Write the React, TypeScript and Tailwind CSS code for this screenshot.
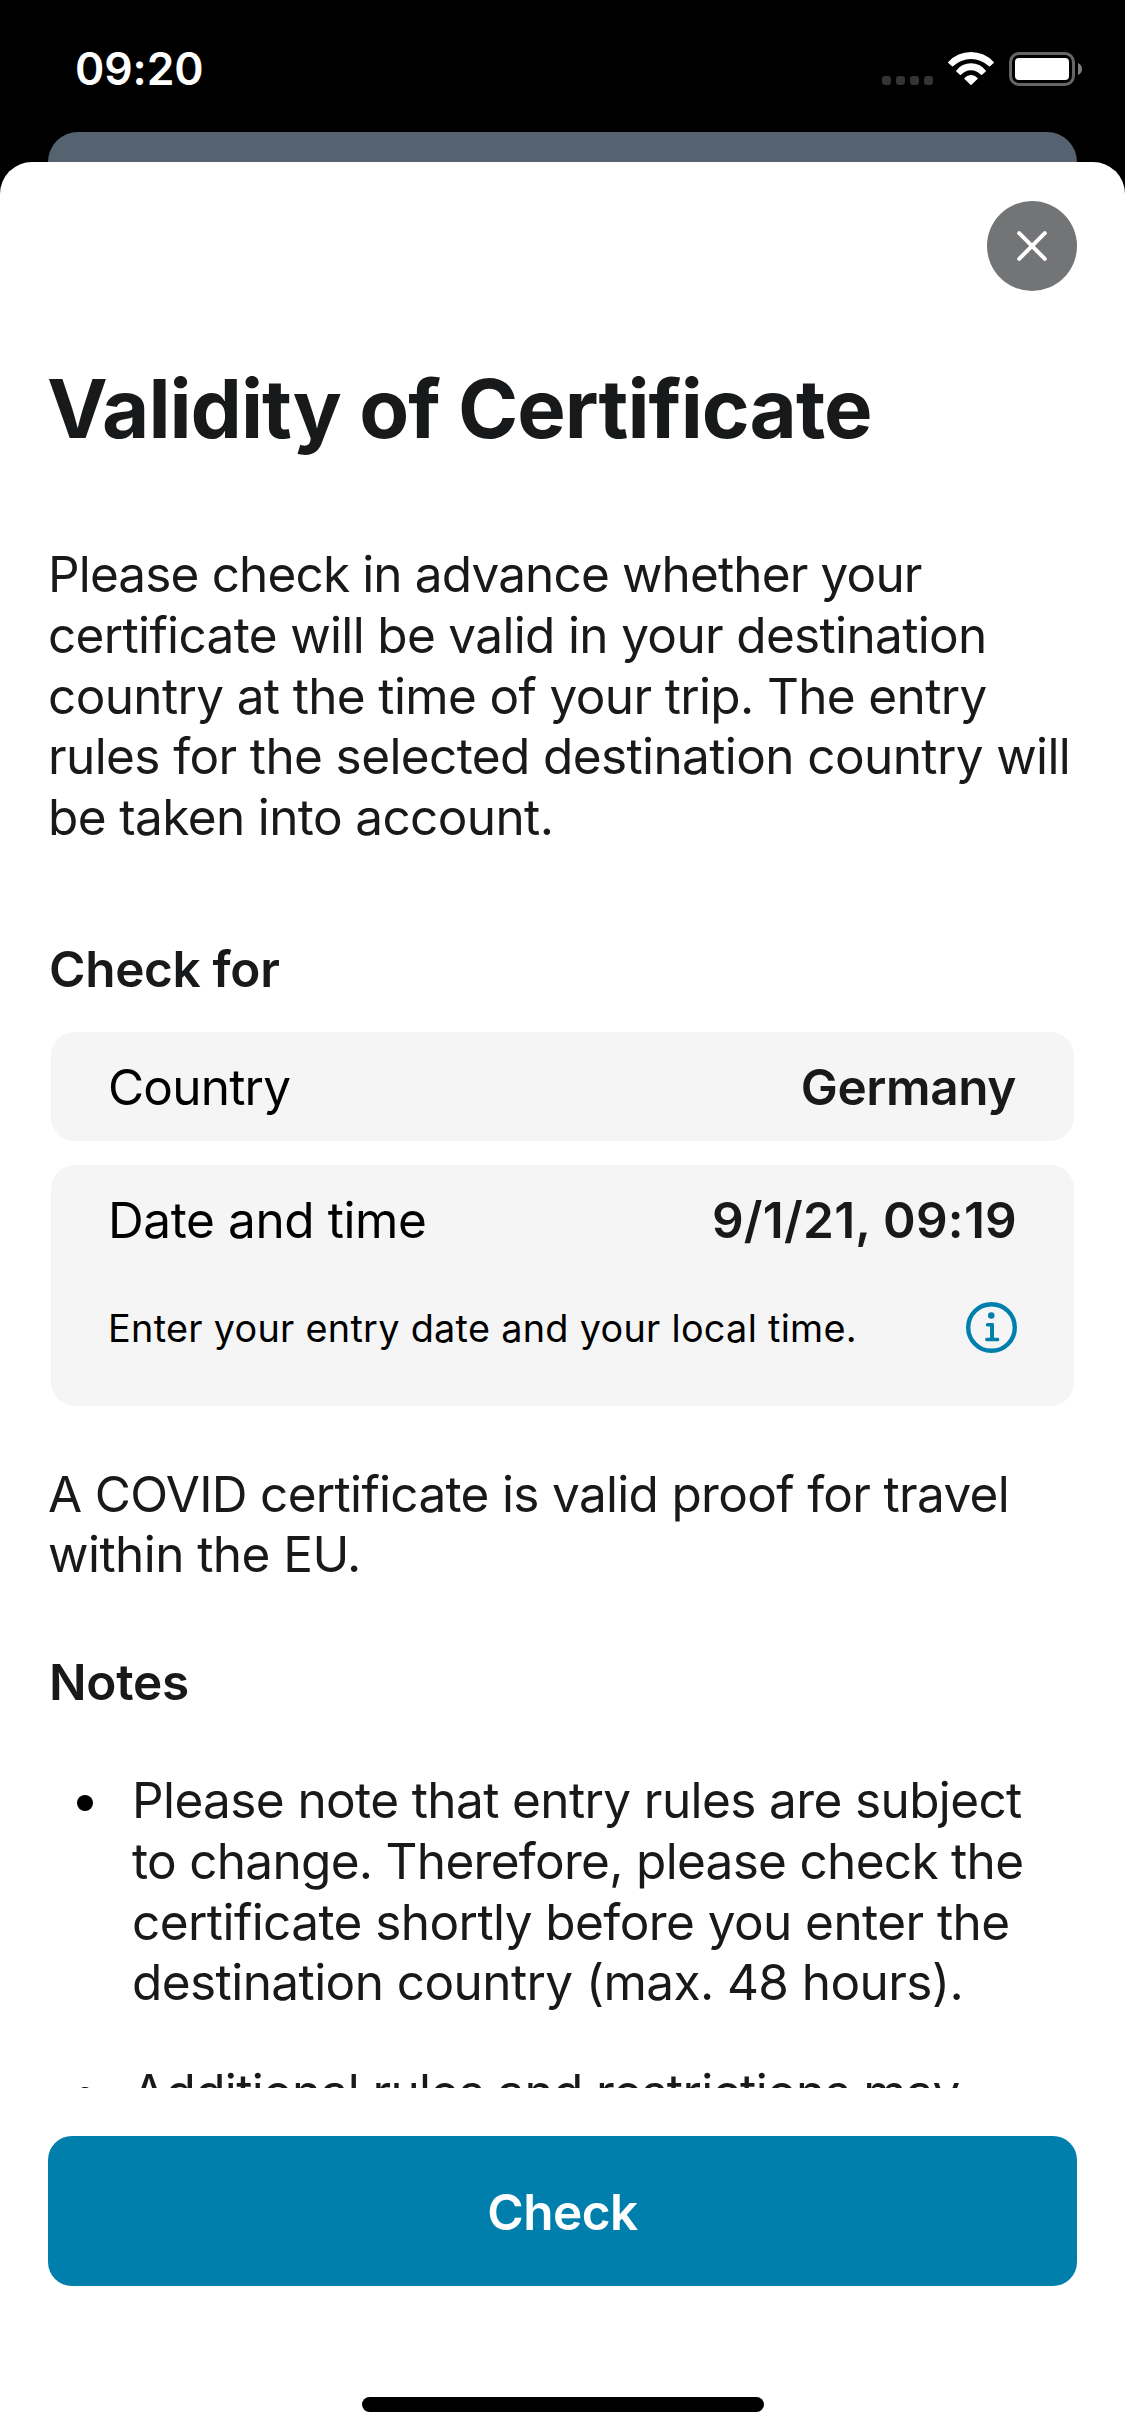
import type { ReactNode } from 'react';

function StatusBar() {
  return (
    <div className="flex h-[132px] items-start justify-between pr-[43px] pl-[75px]">
      <span className="mt-[39px] text-[44.5px] leading-[60px] font-semibold tracking-[-0.1px] text-white">
        09:20
      </span>
      <div className="mt-[52px] flex h-[34px] items-start">
        <div className="mt-6 flex gap-[5px]">
          <span className="size-[9px] rounded-[3px] bg-[#333434]" />
          <span className="size-[9px] rounded-[3px] bg-[#333434]" />
          <span className="size-[9px] rounded-[3px] bg-[#333434]" />
          <span className="size-[9px] rounded-[3px] bg-[#333434]" />
        </div>
        <svg className="ml-[15px]" width="46" height="34" viewBox="0 0 46 34" fill="#fff">
          <path d="M.3 10A30.8 30.8 0 0 1 45.7 10Q46.2 10.5 45.7 11L42 14.3Q41.5 14.8 41 14.3A26 26 0 0 0 5 14.3Q4.5 14.8 4 14.3L.3 11Q-.2 10.5 .3 10Z" />
          <path d="M8.3 18.4A18.5 18.5 0 0 1 37.7 18.4Q38.2 19 37.7 19.5L34.1 22.8Q33.5 23.3 33 22.8A13.5 13.5 0 0 0 13 22.8Q12.5 23.3 11.9 22.8L8.3 19.5Q7.8 19 8.3 18.4Z" />
          <path d="M16.5 26A8.5 8.5 0 0 1 29.5 26Q30 26.5 29.5 27L23.5 32.8Q23 33.3 22.5 32.8L16.5 27Q16 26.5 16.5 26Z" />
        </svg>
        <svg className="ml-[15px]" width="73" height="34" viewBox="0 0 73 34">
          <rect x="1.5" y="1.5" width="63" height="31" rx="8.5" fill="none" stroke="#666" strokeWidth="3" />
          <rect x="6" y="6" width="54" height="22" rx="4" fill="#fff" />
          <path d="M69 11C71.7 12 73 14.4 73 17S71.7 22 69 23Z" fill="#808080" />
        </svg>
      </div>
    </div>
  );
}

function Line({ track, children }: { track: string; children: ReactNode }) {
  return <span className={`block whitespace-nowrap ${track}`}>{children}</span>;
}

function InfoIcon() {
  return (
    <svg width="51" height="51" viewBox="0 0 51 51" fill="none" stroke="#007fad">
      <circle cx="25.5" cy="25.5" r="23.3" strokeWidth="4.4" />
      <circle cx="25.3" cy="13.5" r="3.3" fill="#007fad" stroke="none" />
      <path d="M21.5 22.7H26V37.5M20.8 37.5H31.7" strokeWidth="3.4" strokeLinecap="round" />
      <path d="M26.1 22.7V37.5" strokeWidth="3.8" />
    </svg>
  );
}

function Bullet() {
  return <span className="mt-[25px] mr-[39px] ml-[29px] size-4 shrink-0 rounded-full bg-black" />;
}

export default function App() {
  return (
    <div className="flex h-[2436px] w-[1125px] flex-col overflow-hidden bg-black font-['Inter',sans-serif] text-[49.5px] text-[#17191a]">
      <StatusBar />
      <div className="mx-12 h-[30px] shrink-0 rounded-t-[30px] bg-[#556370]" />
      <main className="flex min-h-0 flex-1 flex-col rounded-t-[32px] bg-white">
        {/* Scrolling content, cut at the footer's top edge */}
        <div className="h-[1926px] shrink-0 overflow-hidden px-12 pt-[39px]">
          <button className="ml-auto flex size-[90px] items-center justify-center rounded-full bg-[#737476]">
            <svg width="32" height="32" viewBox="0 0 32 32" stroke="#fff" strokeWidth="4" strokeLinecap="round">
              <path d="M3.2 3.2L28.8 28.8M28.8 3.2L3.2 28.8" />
            </svg>
          </button>

          <h1 className="mt-[68px] -ml-px text-[81.5px] leading-[100px] font-bold tracking-[-0.98px] whitespace-nowrap">
            Validity of Certificate
          </h1>

          <p className="mt-[85px] leading-[60.8px]">
            <Line track="tracking-[-0.86px]">Please check in advance whether your</Line>
            <Line track="tracking-[-0.66px]">certificate will be valid in your destination</Line>
            <Line track="tracking-[-0.64px]">country at the time of your trip. The entry</Line>
            <Line track="tracking-[-0.61px]">rules for the selected destination country will</Line>
            <Line track="tracking-[-0.62px]">be taken into account.</Line>
          </p>

          <h2 className="mt-[91px] ml-px leading-[60px] font-semibold tracking-[-0.32px]">Check for</h2>

          <div className="mx-[3px] mt-[33px] flex h-[109px] justify-between rounded-3xl bg-[#f5f5f5] px-[57px] pt-[25px] leading-[60px]">
            <span className="tracking-[-0.8px] text-black">Country</span>
            <span className="mr-px font-semibold tracking-[-0.4px]">Germany</span>
          </div>

          <div className="mx-[3px] mt-6 h-[241px] rounded-3xl bg-[#f5f5f5] px-[57px] pt-[25px]">
            <div className="flex justify-between leading-[60px]">
              <span className="tracking-[-0.4px] text-black">Date and time</span>
              <span className="font-semibold tracking-[0.25px]">9/1/21, 09:19</span>
            </div>
            <div className="mt-[52px] flex justify-between">
              <span className="pt-px text-[37.8px] leading-[51px] tracking-[0.29px] text-black">
                Enter your entry date and your local time.
              </span>
              <InfoIcon />
            </div>
          </div>

          <p className="mt-[58px] h-[122px] leading-[60.4px]">
            <Line track="tracking-[-0.68px]">A COVID certificate is valid proof for travel</Line>
            <Line track="tracking-[-0.56px]">within the EU.</Line>
          </p>

          <h2 className="mt-[66px] ml-px leading-[60px] font-semibold tracking-[-0.25px]">Notes</h2>

          <ul className="mt-[58px] flex flex-col gap-12 leading-[60.8px]">
            <li className="flex h-[244px]">
              <Bullet />
              <p>
                <Line track="tracking-[-0.61px]">Please note that entry rules are subject</Line>
                <Line track="tracking-[-0.7px]">to change. Therefore, please check the</Line>
                <Line track="tracking-[-0.57px]">certificate shortly before you enter the</Line>
                <Line track="tracking-[-0.57px]">destination country (max. 48 hours).</Line>
              </p>
            </li>
            <li className="flex">
              <Bullet />
              <p>
                <Line track="tracking-[-0.65px]">Additional rules and restrictions may</Line>
              </p>
            </li>
          </ul>
        </div>

        <div className="flex flex-col items-center bg-white px-12 pt-12">
          <button className="flex h-[150px] w-full justify-center rounded-3xl bg-[#007fad] pt-[46px] leading-[60px] font-semibold tracking-[-0.5px] text-white">
            Check
          </button>
          <div className="mt-[111px] h-[15px] w-[402px] rounded-full bg-black" />
        </div>
      </main>
    </div>
  );
}
